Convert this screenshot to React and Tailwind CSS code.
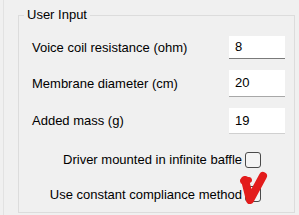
import React from 'react';

const font = { fontFamily: '"Liberation Sans", Arial, sans-serif' };

const fields = [
  { label: 'Voice coil resistance (ohm)', value: '8', box: 'mt-[13px] h-[23px] border-b-[#7a7a7a]' },
  { label: 'Membrane diameter (cm)', value: '20', box: 'mt-[11px] h-[27px] border-b-[#a8a8a8]' },
  { label: 'Added mass (g)', value: '19', box: 'mt-[11px] h-[26px] border-b-[#d0d0d0]' },
];

const Check = ({ label, className }) => (
  <div className={`flex items-center justify-end mr-[24px] ${className}`}>
    <span className="text-[13px] text-black mr-[3px]">{label}</span>
    <span className="w-[16px] h-[16px] rounded-[3px] border border-[#4a4a4a] bg-[#f4f4f4]" />
  </div>
);

export default function App() {
  return (
    <div className="relative w-[299px] h-[215px] bg-[#f0f0f0] flex overflow-hidden" style={font}>
      <div className="ml-[3px] border-l border-[#e2e2e2] flex-1 pl-[14px] pr-[4px] pt-[7px]">
        <fieldset className="border border-[#dcdcdc] h-[206px] pl-[13px] pr-[9px]">
          <legend className="-ml-[8px] px-[3px] text-[13px] leading-[16px] text-black">User Input</legend>
          {fields.map((f) => (
            <div key={f.label} className={`flex items-center justify-between ${f.box.split(' ')[0]}`}>
              <span className="text-[13px] text-black">{f.label}</span>
              <div className={`w-[56px] ${f.box.split(' ')[1]} bg-white border-b ${f.box.split(' ')[2]} flex items-center pl-[6px] text-[13px] text-black`}>
                {f.value}
              </div>
            </div>
          ))}
          <Check label="Driver mounted in infinite baffle" className="mt-[16px]" />
          <Check label="Use constant compliance method" className="mt-[15px]" />
        </fieldset>
      </div>
      {/* red brush tick drawn over the checkbox */}
      <svg className="absolute left-[236px] top-[170px]" width="34" height="38" viewBox="0 0 34 38">
        <path d="M9 10 L14 30 L27 6" fill="none" stroke="#e31c1c" strokeWidth="8" strokeLinecap="round" strokeLinejoin="round" />
        <path d="M7 11 L13 10" fill="none" stroke="#e31c1c" strokeWidth="6" strokeLinecap="round" />
      </svg>
    </div>
  );
}
